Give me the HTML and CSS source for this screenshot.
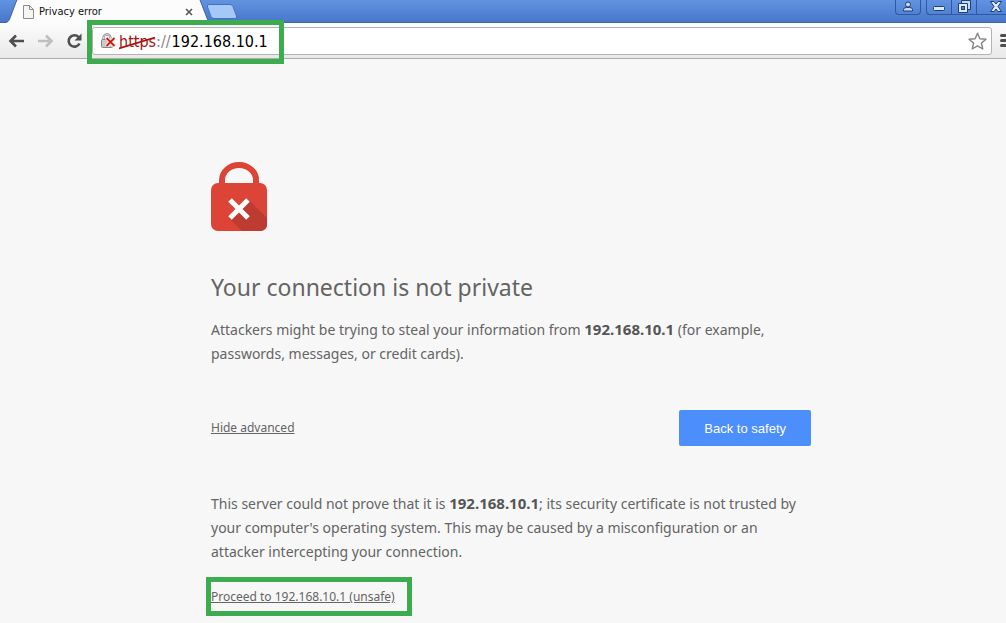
FILE: index.html
```html
<!DOCTYPE html>
<html lang="en">
<head>
    <meta charset="UTF-8">
    <meta name="viewport" content="width=device-width, initial-scale=1.0">
    <title>Privacy error</title>
    <link rel="stylesheet" href="styles.css">
</head>
<body>
    <div class="window">
        <!-- Tab strip -->
        <header class="tab-strip">
            <div class="tab">
                <svg class="tab-edge" width="16" height="23" viewBox="0 0 16 23">
                    <path d="M0 23C4 23 5 21 6 18L12 2L13 0H16V23Z" fill="#fcfcfc"/>
                    <path d="M0 22.500C4 22 5 21 6 18L12 2L13 0" fill="none" stroke="#3c64ad"/>
                </svg>
                <div class="tab-body">
                    <svg width="12" height="14" viewBox="0 0 12 14">
                        <path d="M1.500.5H7.500L11.500 4.500V13.500H1.500Z" fill="#f5f5f5" stroke="#8c8c8c"/>
                        <path d="M7.500.5V4.500H11.500" fill="none" stroke="#8c8c8c"/>
                    </svg>
                    <span class="tab-title">Privacy error</span>
                    <button class="tab-close" aria-label="Close tab">
                        <svg width="8" height="8" viewBox="0 0 8 8">
                            <path d="M1 1L7 7M7 1L1 7" stroke="#5a5a5a" stroke-width="1.700"/>
                        </svg>
                    </button>
                </div>
                <svg class="tab-edge" width="16" height="23" viewBox="0 0 16 23">
                    <path d="M0 0H4L11 18C12 21 13 23 16 23H0Z" fill="#fcfcfc"/>
                    <path d="M4 0L11 18C12 21 13 22 16 22.500" fill="none" stroke="#3c64ad"/>
                </svg>
            </div>
            <button class="new-tab" aria-label="New tab">
                <svg width="32" height="15" viewBox="0 0 32 15">
                    <path d="M3 .5H24Q26 .5 27 2.500L30.500 12Q31 14.500 29 14.500H8Q6 14.500 5 12.500L1.500 3Q.8 .5 3 .5Z" fill="#a6c8f7" stroke="#4572c0"/>
                </svg>
            </button>
            <div class="window-controls">
                <button class="control profile" aria-label="Profile">
                    <svg width="12" height="11" viewBox="0 0 12 11">
                        <path d="M1.500 10V8.500Q1.500 6.500 4.500 6.500H7.500Q10.500 6.500 10.500 8.500V10Z" fill="#c4d9f8" stroke="#203f78"/>
                        <circle cx="6" cy="3.500" r="2.500" fill="#c4d9f8" stroke="#203f78"/>
                    </svg>
                </button>
                <button class="control minimize" aria-label="Minimize">
                    <svg width="12" height="5" viewBox="0 0 12 5">
                        <rect x=".5" y=".5" width="11" height="4" rx="1" fill="#dce8fb" stroke="#203f78"/>
                    </svg>
                </button>
                <button class="control restore" aria-label="Restore">
                    <svg width="13" height="13" viewBox="0 0 13 13">
                        <path d="M3.500 .5H12.500V9.500H3.500Z" fill="#c4d9f8" stroke="#203f78"/>
                        <path d="M.5 3.500H9.500V12.500H.5Z" fill="#dce8fb" stroke="#203f78"/>
                        <rect x="3.500" y="6.500" width="3" height="3" fill="#5181d0" stroke="#203f78"/>
                    </svg>
                </button>
                <button class="control close" aria-label="Close window">
                    <svg width="12" height="11" viewBox="0 0 12 11">
                        <path d="M.5 .5H4L6 3L8 .5H11.500L8 5.500L11.500 10.500H8L6 8L4 10.500H.5L4 5.500Z" fill="#dce8fb" stroke="#203f78"/>
                    </svg>
                </button>
            </div>
        </header>

        <!-- Toolbar -->
        <nav class="toolbar">
            <button class="tool" aria-label="Back">
                <svg width="17" height="14" viewBox="0 0 17 14">
                    <path d="M8 1.500L2.500 7L8 12.500M3 7H16" fill="none" stroke="#4f4f4f" stroke-width="2.600"/>
                </svg>
            </button>
            <button class="tool" aria-label="Forward">
                <svg width="17" height="14" viewBox="0 0 17 14">
                    <path d="M9 1.500L14.500 7L9 12.500M14 7H1" fill="none" stroke="#bfbfbf" stroke-width="2.600"/>
                </svg>
            </button>
            <button class="tool" aria-label="Reload">
                <svg width="17" height="16" viewBox="0 0 17 16">
                    <path d="M12.500 4A5.700 5.700 0 1 0 13.500 10.500" fill="none" stroke="#4f4f4f" stroke-width="2.600"/>
                    <path d="M15.500 .5V7.500H8.500Z" fill="#4f4f4f"/>
                </svg>
            </button>
            <div class="omnibox">
                <svg class="lock" width="16" height="16" viewBox="0 0 16 16">
                    <path d="M3.500 7V5A3.500 3.500 0 0 1 10.500 5V7" fill="none" stroke="#8a8a8a" stroke-width="2.400"/>
                    <path d="M3.500 7V5A3.500 3.500 0 0 1 10.500 5V7" fill="none" stroke="#dedede"/>
                    <rect x="1.500" y="6.500" width="11" height="8" rx="1" fill="#c9c9c9" stroke="#858585"/>
                    <path d="M6.500 5L14.500 13M14.500 5L6.500 13" stroke="#fff" stroke-width="3.600"/>
                    <path d="M6.500 5L14.500 13M14.500 5L6.500 13" stroke="#c81e14" stroke-width="2"/>
                </svg>
                <label class="scheme" for="address"><span class="https">https<svg class="strike" viewBox="0 0 36 14" preserveAspectRatio="none"><path d="M0 12.500L35 1.500" stroke="#a81010" stroke-width="1.800"/></svg></span>://</label>
                <input class="address" id="address" type="text" value="192.168.10.1" spellcheck="false">
                <button class="star" aria-label="Bookmark this page">
                    <svg width="19" height="18" viewBox="0 0 19 18">
                        <path d="M9.500 1.200L11.900 6.700L18 7.200L13.400 11.100L14.800 17L9.500 13.900L4.200 17L5.600 11.100L1 7.200L7.100 6.700Z" fill="#fff" stroke="#858585" stroke-width="1.400" stroke-linejoin="round"/>
                    </svg>
                </button>
                <div class="highlight"></div>
            </div>
            <button class="menu" aria-label="Menu">
                <svg width="14" height="13" viewBox="0 0 14 13">
                    <path d="M1.500 1.500H12.500M1.500 6.500H12.500M1.500 11.500H12.500" stroke="#4f4f4f" stroke-width="3" stroke-linecap="round"/>
                </svg>
            </button>
        </nav>

        <!-- Interstitial -->
        <main class="interstitial">
            <svg class="error-icon" width="56" height="70" viewBox="0 0 56 70">
                <path d="M11 24V18A17 15 0 0 1 45 18V24" fill="none" stroke="#db4437" stroke-width="6"/>
                <rect y="21" width="56" height="48" rx="7" fill="#db4437"/>
                <path d="M37 37L56 56V62Q56 69 49 69H31L18 56Z" fill="#bd3b30"/>
                <path d="M19 38L37 56M37 38L19 56" stroke="#fff" stroke-width="5"/>
            </svg>
            <h1>Your connection is not private</h1>
            <p>Attackers might be trying to steal your information from <strong>192.168.10.1</strong> (for example, passwords, messages, or credit cards).</p>
            <div class="actions">
                <a class="small-link" href="#details">Hide advanced</a>
                <button class="safety-button">Back to safety</button>
            </div>
            <div class="details" id="details">
                <p>This server could not prove that it is <strong>192.168.10.1</strong>; its security certificate is not trusted by your computer's operating system. This may be caused by a misconfiguration or an attacker intercepting your connection.</p>
                <div class="proceed">
                    <a class="small-link" href="#proceed">Proceed to 192.168.10.1 (unsafe)</a>
                    <div class="highlight"></div>
                </div>
            </div>
        </main>
    </div>
</body>
</html>
```
FILE: styles.css
```css
* {
    box-sizing: border-box;
}
body {
    min-height: 100vh;
    margin: 0;
    background-color: #f7f7f7;
    font-family: "Noto Sans", sans-serif;
    color: #646464;
    overflow-x: hidden;
}
button {
    display: flex;
    align-items: center;
    justify-content: center;
    padding: 0;
    border: none;
    background: none;
    cursor: pointer;
}
svg {
    display: block;
    flex-shrink: 0;
}
/* The window runs a little past the right edge of the screen */
.window {
    margin-right: -16px;
}

/* Tab strip */
.tab-strip {
    display: flex;
    height: 23px;
    padding-left: 4px;
    background: linear-gradient(#6293e0, #4877cb);
    border-bottom: 1px solid #3c64ad;
}
.tab {
    display: flex;
    height: 23px;
}
.tab-body {
    display: flex;
    align-items: center;
    gap: 5px;
    width: 176px;
    padding-left: 2px;
    background-color: #fcfcfc;
}
.tab-title {
    flex: 1;
    font-family: "DejaVu Sans Condensed", "DejaVu Sans", sans-serif;
    font-stretch: condensed;
    font-size: 11px;
    color: #111;
}
.tab-close {
    width: 14px;
    height: 14px;
}
.new-tab {
    align-self: flex-start;
    margin-top: 4px;
    margin-left: -6px;
}
.window-controls {
    display: flex;
    align-items: flex-start;
    margin-left: auto;
}
.control {
    width: 26px;
    height: 15px;
    padding-bottom: 2px;
    border: 1px solid #31589f;
    border-top: none;
}
.profile {
    margin-right: 5px;
    border-radius: 0 0 4px 4px;
}
.minimize {
    width: 25px;
    padding: 2px 0 0;
    border-right: none;
    border-bottom-left-radius: 4px;
}
.close {
    width: 45px;
    padding-right: 6px;
    border-left: none;
}

/* Toolbar */
.toolbar {
    display: flex;
    align-items: center;
    height: 36px;
    padding: 0 8px;
    background: linear-gradient(#fcfcfc, #e9e9e9);
    border-bottom: 1px solid #adadad;
}
.tool {
    width: 17px;
    margin-right: 12px;
}
.omnibox {
    position: relative;
    flex: 1;
    display: flex;
    align-items: center;
    height: 28px;
    margin-right: 8px;
    margin-left: -3px;
    padding: 0 4px 0 7px;
    background-color: #fff;
    border: 1px solid #b3b3b3;
    border-radius: 3px;
}
.scheme,
.address {
    padding: 2px 0 0;
    font-family: "DejaVu Sans Condensed", "DejaVu Sans", sans-serif;
    font-stretch: condensed;
    font-size: 16px;
}
.scheme {
    margin-left: 3px;
    margin-right: 1px;
    color: #888;
}
.https {
    position: relative;
    color: #a81010;
}
.strike {
    position: absolute;
    left: 0;
    top: 4px;
    width: 100%;
    height: 14px;
}
.address {
    flex: 1;
    min-width: 0;
    border: none;
    outline: none;
    background: none;
    color: #000;
}
.menu {
    width: 14px;
}
.highlight {
    position: absolute;
    border: 5px solid #3dab4f;
    pointer-events: none;
}
.omnibox .highlight {
    left: -6px;
    top: -8px;
    width: 197px;
    height: 44px;
}

/* Interstitial */
.interstitial {
    max-width: 600px;
    margin: 0 auto;
    padding-top: 103px;
    font-size: 14px;
    line-height: 24px;
}
h1 {
    margin: 39px 0 15px;
    font-size: 23px;
    font-weight: normal;
    line-height: 32px;
}
p {
    margin: 0;
}
strong {
    font-size: 15px;
    line-height: 1;
    color: #555;
}
.actions {
    display: flex;
    align-items: center;
    justify-content: space-between;
    margin-top: 44px;
}
.small-link {
    font-size: 12px;
    color: #646464;
}
.safety-button {
    height: 36px;
    padding: 0 25px;
    background-color: #4c8efb;
    border-radius: 2px;
    font-family: "Liberation Sans", Arial, sans-serif;
    font-size: 13px;
    font-weight: 500;
    color: #fff;
}
.safety-button:hover {
    background-color: #3b78e7;
}
.details {
    margin-top: 46px;
}
.proceed {
    position: relative;
    width: fit-content;
    margin-top: 20px;
}
.proceed .highlight {
    inset: -7px -17px -7px -5px;
}
```
